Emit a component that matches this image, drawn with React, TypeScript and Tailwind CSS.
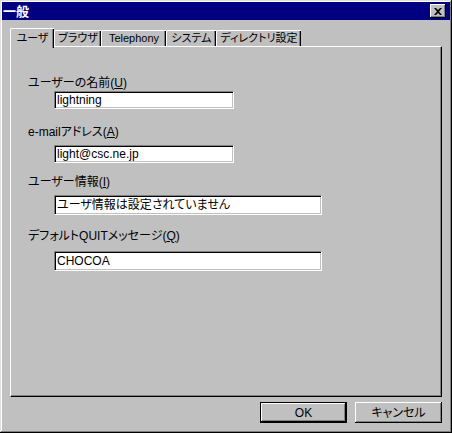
import React from 'react';

const font = { fontFamily: '"Liberation Sans", "Noto Sans CJK JP", sans-serif' };

const tabs = [
  { label: 'ユーザ', w: 'w-[44px]', active: true },
  { label: 'ブラウザ', w: 'w-[47px]', active: false },
  { label: 'Telephony', w: 'w-[65px]', active: false },
  { label: 'システム', w: 'w-[50px]', active: false },
  { label: 'ディレクトリ設定', w: 'w-[85px]', active: false },
];

const Field: React.FC<{ label: React.ReactNode; value: string; wide?: boolean; labelTop: string; inputTop: string }> = ({
  label,
  value,
  wide,
  labelTop,
  inputTop,
}) => (
  <div className={labelTop}>
    <div className="ml-[17px] h-[14px] text-[12px] leading-[14px] text-black">{label}</div>
    <div
      className={`${inputTop} ml-[43px] ${wide ? 'w-[268px] h-[20px]' : 'w-[180px] h-[18px]'} bg-white border border-t-[#808080] border-l-[#808080] border-r-white border-b-white shadow-[inset_1px_1px_#000,inset_-1px_-1px_#c0c0c0] pl-[2px] flex items-center text-[12px] text-black`}
    >
      {value}
    </div>
  </div>
);

export default function App() {
  return (
    <div
      className="w-[452px] h-[433px] bg-[#c0c0c0] p-[2px] shadow-[inset_-1px_-1px_#000,inset_1px_1px_#dfdfdf,inset_-2px_-2px_#808080,inset_2px_2px_#fff] flex flex-col [font-feature-settings:'palt']"
      style={font}
    >
      {/* title bar */}
      <div className="h-[18px] bg-[#000080] flex items-center justify-between pl-[1px] pr-[4px]">
        <span className="text-white font-bold text-[13px] leading-none">一般</span>
        <div className="w-[16px] h-[14px] bg-[#c0c0c0] shadow-[inset_-1px_-1px_#000,inset_1px_1px_#fff,inset_-2px_-2px_#808080] flex items-center justify-center">
          <svg width="8" height="7" viewBox="0 0 8 7">
            <path d="M0 0h2l2 2 2-2h2L5 3.5 8 7H6L4 5 2 7H0l3-3.5z" fill="#000" />
          </svg>
        </div>
      </div>

      {/* tabs */}
      <div className="mt-[8px] ml-[8px] flex items-end h-[18px] relative z-10">
        {tabs.map((t) => (
          <div
            key={t.label}
            className={`${t.w} ${
              t.active ? 'h-[20px] -mb-[2px] bg-[#c0c0c0]' : 'h-[16px]'
            } border-t border-l border-white rounded-tl-[2px] shadow-[inset_-1px_0_#000,inset_-2px_0_#808080] flex items-center justify-center text-[11px] text-black whitespace-nowrap overflow-hidden`}
          >
            {t.label}
          </div>
        ))}
      </div>

      {/* panel */}
      <div className="ml-[8px] w-[432px] h-[351px] border-t border-l border-white border-r border-b border-r-black border-b-black shadow-[inset_-1px_-1px_#808080]">
        <Field
          labelTop="mt-[29px]"
          inputTop="mt-[1px]"
          label={<>ユーザーの名前(<u>U</u>)</>}
          value="lightning"
        />
        <Field
          labelTop="mt-[16px]"
          inputTop="mt-[6px]"
          label={<>e-mailアドレス(<u>A</u>)</>}
          value="light@csc.ne.jp"
        />
        <Field
          labelTop="mt-[12px]"
          inputTop="mt-[6px]"
          wide
          label={<>ユーザー情報(<u>I</u>)</>}
          value="ユーザ情報は設定されていません"
        />
        <Field
          labelTop="mt-[14px]"
          inputTop="mt-[8px]"
          wide
          label={<>デフォルトQUITメッセージ(<u>Q</u>)</>}
          value="CHOCOA"
        />
      </div>

      {/* buttons */}
      <div className="mt-[5px] flex justify-end gap-[8px] pr-[8px]">
        <div className="w-[87px] h-[21px] border border-black bg-[#c0c0c0] shadow-[inset_-1px_-1px_#000,inset_1px_1px_#fff,inset_-2px_-2px_#808080] flex items-center justify-center text-[12px] text-black">
          OK
        </div>
        <div className="w-[87px] h-[21px] bg-[#c0c0c0] shadow-[inset_-1px_-1px_#000,inset_1px_1px_#fff,inset_-2px_-2px_#808080] flex items-center justify-center text-[12px] text-black">
          キャンセル
        </div>
      </div>
    </div>
  );
}
